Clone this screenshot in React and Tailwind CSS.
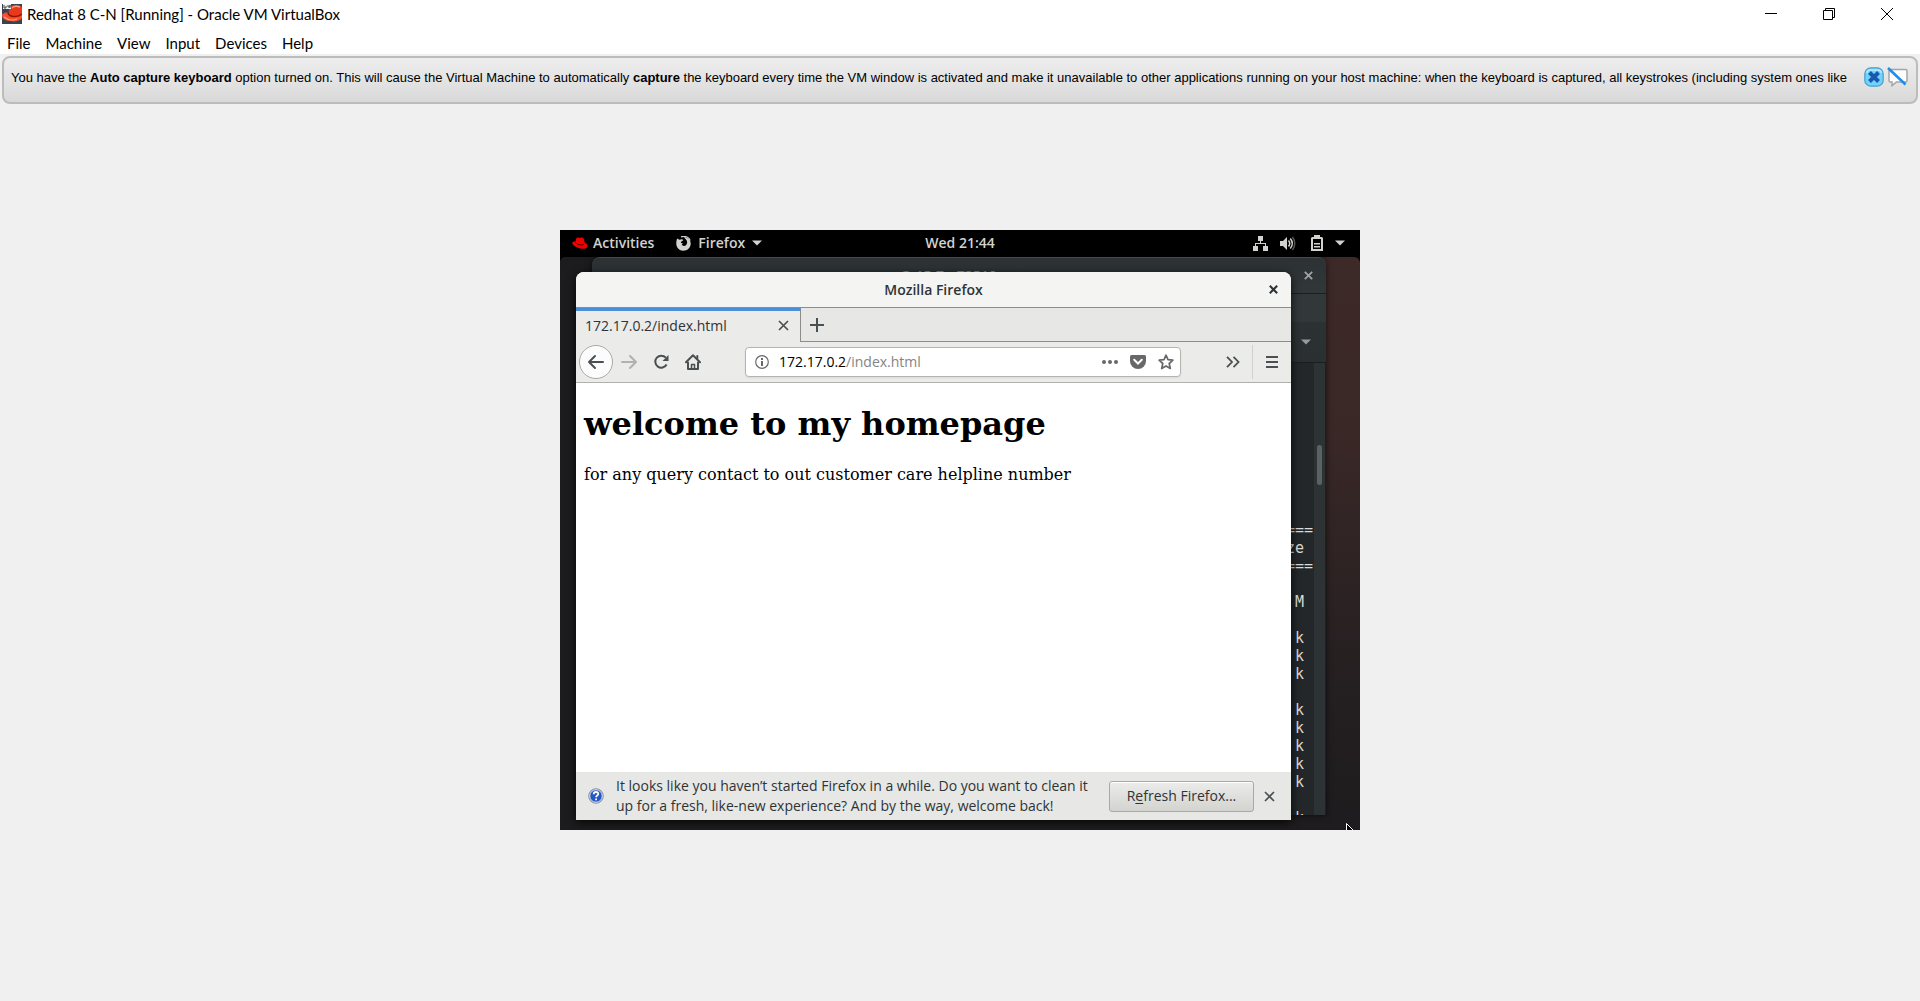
import React from 'react';

const MENUS = ['File', 'Machine', 'View', 'Input', 'Devices', 'Help'];
const TERMINAL_ROWS = [
  '==========', 'Size ', '==========', '', 'M ', '', 'k ', 'k ', 'k ', '', 'k ', 'k ', 'k ', 'k ', 'k ', '', 'k ',
];

function RedHatTile() {
  return (
    <svg width="20" height="20" viewBox="0 0 20 20" aria-hidden="true">
      <rect width="20" height="20" fill="#3b4350" />
      <path d="M7 9C6 4 9 1 13 1c4 0 7 1 7 3v7l-6 3-7-2z" fill="#e8391c" />
      <path d="M10 4c2-2 5-2 8-1" stroke="#ff9a78" strokeWidth="1.500" fill="none" />
      <path d="M0 11c1-2 4-3 6-2 1 3 8 4 14 1v4c-2 3-8 4-11 3C4 17 0 15 0 11z" fill="#f4512b" />
      <path d="M6 9c1 4 9 5 14 1" stroke="#9a1206" strokeWidth="1.500" fill="none" />
      <path d="M2 13c4 3 8 4 13 2" stroke="#ffa183" strokeWidth="1.200" fill="none" />
      <rect x="1" width="8" height="5" fill="#f4f4f4" />
      <path d="M2 1v3h2V2M6 1v2h2v-2v3" stroke="#444" fill="none" />
    </svg>
  );
}

function HatIcon() {
  return (
    <svg width="16" height="13" viewBox="0 0 16 13" aria-hidden="true">
      <path d="M4.400 1.200C5 .3 6 .6 7.300 1c1.500-.9 3.800-.6 4.500 1l1 3.700c1.800.7 3.200 2.200 2.500 4-1 2.600-6 2.500-9.300 1C3 9.500 0 7.600.3 5.700.5 4.500 2 4.300 3.300 4.400z" fill="#f10000" />
      <path d="M3.300 5.200c.8 2 6.200 3.600 8.500 2.200" fill="none" stroke="#300000" />
    </svg>
  );
}

function FirefoxIcon() {
  return (
    <svg width="15" height="15" viewBox="0 0 15 15" aria-hidden="true">
      <path d="M1.200 2.600L3.400 3.800C5 2.800 6.600 3 7.400 3.900L6 5.200c-1 .3-1.300.9-1 1.700l2 .4-1.300 1.300c.8 1.600 3.200 1.700 4.500.4 1.500-1.500 1.200-4-.2-5.400L8 1.500C9.700.8 15 2.800 14.700 8c-.3 4-3.500 6.700-7.200 6.700C3 14.700.3 11.500.3 7.500c0-2 .3-3.700.9-4.900z" fill="#d2d2cf" />
      <path d="M5 .9C8.500-.5 13 .8 14.200 4.500" stroke="#d2d2cf" strokeWidth="1.200" fill="none" />
    </svg>
  );
}

function Caret({ color = '#d2d2cf' }) {
  return (
    <svg width="10" height="6" viewBox="0 0 10 6" aria-hidden="true">
      <path d="M0 .5h10L5 5.500z" fill={color} />
    </svg>
  );
}

function Cross({ size = 11, width = 1.7, color = '#4a5052' }) {
  return (
    <svg width={size} height={size} viewBox="0 0 11 11" aria-hidden="true">
      <path d="M1 1l9 9M10 1l-9 9" stroke={color} strokeWidth={width} fill="none" />
    </svg>
  );
}

function HostWindowHeader() {
  return (
    <header className="bg-white font-['Lato',sans-serif] text-[15px] text-black">
      <div className="flex h-7 items-center">
        <div className="flex flex-1 items-center gap-[5px] pl-0.5">
          <RedHatTile />
          <h1 className="leading-5">Redhat 8 C-N [Running] - Oracle VM VirtualBox</h1>
        </div>
        <div className="flex items-center pr-1">
          <button aria-label="Minimize" className="grid h-7 w-[58px] place-items-center">
            <svg width="12" height="12"><path d="M0 5.500h12" stroke="#000" /></svg>
          </button>
          <button aria-label="Restore" className="grid h-7 w-[58px] place-items-center">
            <svg width="12" height="12" fill="none" stroke="#000">
              <path d="M.5 2.500h9v9h-9zM2.500 2.500v-2h9v9h-2" />
            </svg>
          </button>
          <button aria-label="Close" className="grid h-7 w-[58px] place-items-center">
            <svg width="12" height="12" stroke="#000"><path d="M0 0l12 12M12 0L0 12" /></svg>
          </button>
        </div>
      </div>
      <nav className="flex h-[26px] items-center gap-[15px] pt-1 pl-[7px]">
        {MENUS.map((m) => (
          <button key={m} className="leading-5">{m}</button>
        ))}
      </nav>
    </header>
  );
}

function CaptureNotice() {
  return (
    <section className="mx-0.5 mt-0.5 flex h-12 items-start rounded-lg border-2 border-[#bcbcbc] bg-linear-to-b from-[#eeeeee] to-[#d9d9d9] pt-2 pr-2 pl-[7px]">
      <p className="min-w-0 flex-1 overflow-hidden font-['Liberation_Sans',sans-serif] text-[13px] leading-6 whitespace-nowrap text-black">
        You have the <b>Auto capture keyboard</b> option turned on. This will cause the Virtual Machine to automatically <b>capture</b> the keyboard every time the VM window is activated and make it unavailable to other applications running on your host machine: when the keyboard is captured, all keystrokes (including system ones like
      </p>
      <button aria-label="Dismiss message" className="mt-px">
        <svg width="20" height="20" viewBox="0 0 20 20">
          <rect x=".8" y=".8" width="18.400" height="18.400" rx="6" fill="#6fd3fb" stroke="#4c9fcd" strokeWidth="1.200" />
          <path d="M3 6c0-2 1-3 3-3h8c2 0 3 1 3 3" stroke="#b4ecff" strokeWidth="1.500" fill="none" />
          <path d="M5.500 5.500l9 9M14.500 5.500l-9 9" stroke="#1a58ad" strokeWidth="4" />
        </svg>
      </button>
      <button aria-label="Do not show this message again" className="mt-px ml-[3px]">
        <svg width="21" height="20" viewBox="0 0 21 20" fill="none">
          <path d="M3.500 2.500h15q1.500 0 1.500 1.500v9.500q0 1.500-1.500 1.500H9.500L5 18.700V15H3.500Q2 15 2 13.500V4q0-1.500 1.500-1.500z" fill="#fcfcfc" stroke="#a5a5a5" strokeWidth="1.500" />
          <path d="M1 1l17.500 16.500" stroke="#1c8cf0" strokeWidth="2.500" />
        </svg>
      </button>
    </section>
  );
}

function GnomeBar() {
  return (
    <div className="grid h-[27px] grid-cols-[1fr_auto_1fr] items-center bg-black pb-px text-sm leading-5 font-semibold text-[#d2d2cf]">
      <div className="flex items-center pl-3">
        <button className="flex items-center gap-[5px]"><HatIcon />Activities</button>
        <button className="ml-[22px] flex items-center gap-[7px]">
          <FirefoxIcon />
          <span>Firefox</span>
          <Caret />
        </button>
      </div>
      <button className="font-semibold">Wed 21:44</button>
      <button aria-label="System menu" className="flex items-center justify-end pr-[15px]">
        <svg width="15" height="15" viewBox="0 0 15 15" fill="#d2d2cf">
          <path d="M5 0h5v5H5zM0 10h5v5H0zM10 10h5v5h-5z" />
          <path d="M7 5h1v2h5v3h-1V8H3v2H2V7h5z" />
        </svg>
        <svg className="ml-3" width="16" height="15" viewBox="0 0 16 15">
          <path d="M0 5h3l4-4v13l-4-4H0z" fill="#d2d2cf" />
          <path d="M8.500 4.500q2.500 3 0 6" stroke="#d2d2cf" strokeWidth="1.500" fill="none" />
          <path d="M10.300 2.500q4 5 0 10" stroke="#d2d2cf" strokeWidth="1.500" fill="none" />
          <path d="M12.500 1q4.500 6.500 0 13" stroke="#555" strokeWidth="1.500" fill="none" />
        </svg>
        <svg className="ml-[15px]" width="12" height="16" viewBox="0 0 12 16" fill="#d2d2cf">
          <path fillRule="evenodd" d="M3 0h6v2h2l1 1v13H0V3l1-1h2zM2 4v10h8V4z" />
          <path d="M3 8h6v1.500H3zM3 11h6v1.500H3z" />
        </svg>
        <span className="ml-3 flex"><Caret /></span>
      </button>
    </div>
  );
}

function Terminal() {
  return (
    <section aria-label="Terminal" className="absolute top-0 right-[34px] bottom-[15px] left-8 flex flex-col overflow-hidden rounded-t-lg border-t border-[#434b4e] bg-[#232729] shadow-[0_0_6px_rgba(0,0,0,0.6)]">
      <div className="flex h-9 shrink-0 items-center justify-between border-b border-[#1b1e1f] bg-linear-to-b from-[#2c3234] to-[#32383a] pr-[13px] text-sm leading-5 font-semibold text-[#8b908f]">
        <span />
        <span>@ 15-7e-73512</span>
        <button aria-label="Close terminal"><Cross size={9} width={2.2} color="#a0a4a3" /></button>
      </div>
      <div className="h-7 shrink-0 bg-[#32383a]" />
      <div className="flex h-[41px] shrink-0 items-center justify-end border-b border-[#1b1e1f] bg-linear-to-b from-[#2c3233] to-[#2a2f31] pr-[15px]">
        <Caret color="#969a99" />
      </div>
      <div className="flex min-h-0 flex-1 bg-[#232729]">
        <pre className="min-w-0 flex-1 overflow-hidden pt-[158px] pr-px text-right font-['DejaVu_Sans_Mono',monospace] text-[15px] leading-[18px] text-[#dcdcd8]">
          {TERMINAL_ROWS.join('\n')}
        </pre>
        <div className="w-3 border-r border-[#1d2021] bg-[#2d3234] px-[3px] pt-[82px]">
          <div className="h-10 rounded-full bg-[#5c6163]" />
        </div>
      </div>
    </section>
  );
}

function BrowserToolbar() {
  return (
    <div className="flex h-[41px] items-center border-b border-[#b0b0ad] bg-[#ebebe9] pl-[3px] text-[#4a5052]">
      <button aria-label="Back" className="grid size-[34px] place-items-center rounded-full border border-[#a9a9a7] bg-[#fcfcfc]">
        <svg width="18" height="16" viewBox="0 0 18 16" fill="none" stroke="currentColor" strokeWidth="2" strokeLinecap="round" strokeLinejoin="round">
          <path d="M8 2L2 8l6 6M2 8h14" />
        </svg>
      </button>
      <button aria-label="Forward" className="ml-2 text-[#b0b2b1]">
        <svg width="16" height="16" viewBox="0 0 16 16" fill="none" stroke="currentColor" strokeWidth="2" strokeLinecap="round" strokeLinejoin="round">
          <path d="M9 2l6 6-6 6M15 8H1" />
        </svg>
      </button>
      <button aria-label="Reload" className="ml-4">
        <svg width="16" height="16" viewBox="0 0 16 16" fill="none" stroke="currentColor" strokeWidth="2">
          <path d="M12.800 3.700A6 6 0 1 0 13.600 10.500" />
          <path d="M15.500 1V7H9.500z" fill="currentColor" stroke="none" />
        </svg>
      </button>
      <button aria-label="Home" className="ml-4">
        <svg width="16" height="16" viewBox="0 0 16 16" fill="none" stroke="currentColor" strokeWidth="2" strokeLinecap="round" strokeLinejoin="round">
          <path d="M1 8.300L8 1.300l7 7" />
          <path d="M3 8.500V15h10V8.500" />
          <path d="M6.500 15v-4.500h3V15" strokeWidth="1.500" />
          <path d="M12.300 2v2.500" />
        </svg>
      </button>
      <div className="mr-[45px] ml-[44px] flex h-[30px] min-w-0 flex-1 items-center rounded border border-[#b4b4b1] bg-white pr-1.5 pl-[9px] text-[#686868] shadow-[0_1px_2px_rgba(0,0,0,0.08)]">
        <svg width="14" height="14" viewBox="0 0 14 14" aria-hidden="true">
          <circle cx="7" cy="7" r="6.300" fill="none" stroke="currentColor" strokeWidth="1.200" />
          <path d="M6 3h2v2H6zM6 6h2v5H6z" fill="currentColor" />
        </svg>
        <span className="ml-2.5 flex-1 text-sm text-[#858585]"><span className="text-black">172.17.0.2</span>/index.html</span>
        <button aria-label="Page actions">
          <svg width="16" height="4" fill="currentColor"><circle cx="2" cy="2" r="2" /><circle cx="8" cy="2" r="2" /><circle cx="14" cy="2" r="2" /></svg>
        </button>
        <button aria-label="Save to Pocket" className="ml-3">
          <svg width="16" height="14" viewBox="0 0 16 14">
            <path d="M1.500 0h13Q16 0 16 1.500V6a8 8 0 0 1-16 0V1.500Q0 0 1.500 0z" fill="currentColor" />
            <path d="M4.200 4.800L8 8.500l3.800-3.700" stroke="#fff" strokeWidth="2" fill="none" strokeLinecap="round" />
          </svg>
        </button>
        <button aria-label="Bookmark this page" className="ml-3">
          <svg width="16" height="16" viewBox="0 0 16 16" fill="none" stroke="currentColor" strokeWidth="1.700" strokeLinejoin="round">
            <path d="M8 1.200l2 4.500 4.900.5-3.700 3.300 1.100 5L8 12l-4.300 2.500 1.100-5L1.100 6.200 6 5.700z" />
          </svg>
        </button>
      </div>
      <button aria-label="More tools">
        <svg width="14" height="12" viewBox="0 0 14 12" fill="none" stroke="currentColor" strokeWidth="1.800"><path d="M1 .8L6 6l-5 5.200M7.500.8l5 5.200-5 5.200" /></svg>
      </button>
      <div className="ml-3 h-[34px] w-px bg-[#d0d0ce]" />
      <button aria-label="Open menu" className="mr-[13px] ml-[13px]">
        <svg width="12" height="12" fill="none" stroke="currentColor" strokeWidth="2"><path d="M0 1h12M0 6h12M0 11h12" /></svg>
      </button>
    </div>
  );
}

function Firefox() {
  return (
    <section aria-label="Mozilla Firefox" className="absolute top-[15px] right-[69px] bottom-2.5 left-4 flex flex-col overflow-hidden rounded-t-lg bg-white shadow-[0_2px_10px_rgba(0,0,0,0.8)]">
      <div className="grid h-9 shrink-0 grid-cols-[1fr_auto_1fr] items-center border-b border-[#8b8e88] bg-[#f4f4f3] text-sm font-semibold text-[#2e3436]">
        <span />
        <h2>Mozilla Firefox</h2>
        <button aria-label="Close window" className="mr-[13px] justify-self-end"><Cross size={9} width={2.5} color="#2e3436" /></button>
      </div>
      <div className="flex h-[34px] shrink-0 bg-[#e7e7e5] text-sm text-[#2e3436]">
        <div className="flex w-[225px] items-center justify-between border-t-3 border-r border-t-[#4a90d9] border-r-[#8b8e88] bg-[#ebebe9] pr-[11px] pb-0.5 pl-[9px]">
          <span>172.17.0.2/index.html</span>
          <button aria-label="Close tab"><Cross /></button>
        </div>
        <div className="flex flex-1 items-center border-b border-[#8b8e88] pl-[9px]">
          <button aria-label="New tab">
            <svg width="14" height="14" stroke="#4a5052" strokeWidth="2"><path d="M7 0v14M0 7h14" /></svg>
          </button>
        </div>
      </div>
      <BrowserToolbar />
      <main className="min-h-0 flex-1 bg-white px-2 pt-[23px] font-['DejaVu_Serif',serif] text-black">
        <h1 className="text-[32px] leading-[37px] font-bold">welcome to my homepage</h1>
        <p className="mt-[22px] text-base leading-5">for any query contact to out customer care helpline number</p>
      </main>
      <div className="flex h-12 shrink-0 items-center bg-[#e7e7e5] text-sm leading-5 text-[#2e3436]">
        <svg className="ml-3 shrink-0" width="16" height="16" viewBox="0 0 16 16" aria-hidden="true">
          <circle cx="8" cy="8" r="7.300" fill="#2458c4" stroke="#9a9a9a" />
          <circle cx="8" cy="8" r="6.300" fill="none" stroke="#f2f2f2" />
          <path d="M5.700 6.300C5.700 3.200 10.500 3.400 10.300 6c-.1 1.400-2.200 1.500-2.200 3.200M8.100 10.500v1.700" stroke="#fff" strokeWidth="1.800" fill="none" />
        </svg>
        <p className="ml-3 min-w-0 flex-1">
          It looks like you haven’t started Firefox in a while. Do you want to clean it<br />
          up for a fresh, like-new experience? And by the way, welcome back!
        </p>
        <button className="h-[31px] w-[145px] rounded-[3px] border border-[#a9a9a6] bg-linear-to-b from-[#ececea] to-[#d3d3d0] shadow-[inset_0_1px_0_#ffffff]">
          R<span className="underline underline-offset-2">e</span>fresh Firefox...
        </button>
        <button aria-label="Dismiss notification" className="mr-4 ml-[10px]"><Cross /></button>
      </div>
    </section>
  );
}

export default function App() {
  return (
    <div className="min-h-screen bg-[#f0f0f0]">
      <HostWindowHeader />
      <CaptureNotice />
      <div className="mx-auto mt-[126px] h-[600px] w-[800px] overflow-hidden bg-black font-['Open_Sans',sans-serif]">
        <GnomeBar />
        <div className="relative h-[573px] overflow-hidden rounded-t-md bg-[linear-gradient(to_bottom,#3c2928_0%,#3a2827_30%,#241f21_75%,#1e1c1e_100%)]">
          <div className="h-full w-10 bg-[#1c1b1d]" />
          <Terminal />
          <Firefox />
          <svg className="absolute right-[6px] bottom-0" width="8" height="7" viewBox="0 0 8 7" aria-hidden="true">
            <path d="M.5 8V.5l7.500 7.500" fill="#000" stroke="#fff" />
          </svg>
        </div>
      </div>
    </div>
  );
}
